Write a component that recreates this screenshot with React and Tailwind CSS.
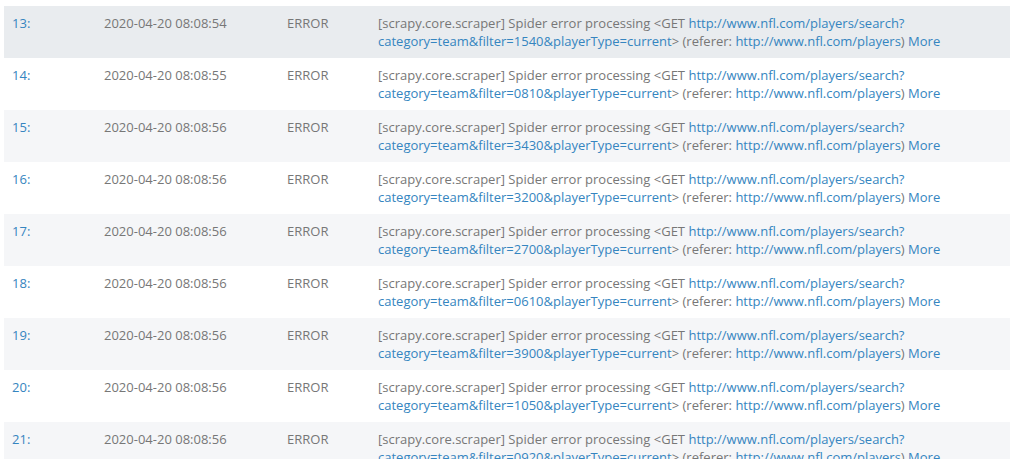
const rows = [
  { n: 13, t: '2020-04-20 08:08:54', f: '1540' },
  { n: 14, t: '2020-04-20 08:08:55', f: '0810' },
  { n: 15, t: '2020-04-20 08:08:56', f: '3430' },
  { n: 16, t: '2020-04-20 08:08:56', f: '3200' },
  { n: 17, t: '2020-04-20 08:08:56', f: '2700' },
  { n: 18, t: '2020-04-20 08:08:56', f: '0610' },
  { n: 19, t: '2020-04-20 08:08:56', f: '3900' },
  { n: 20, t: '2020-04-20 08:08:56', f: '1050' },
  { n: 21, t: '2020-04-20 08:08:56', f: '0920' },
];

function LogRow({ row, index }) {
  // first row is hovered, rest alternate
  const bg = index === 0 ? 'bg-[#e9ecef]' : index % 2 === 0 ? 'bg-[#f5f6f8]' : 'bg-white';
  return (
    <div className={`grid grid-cols-[92px_183px_91px_640px] pl-2 pt-2 pb-2 h-[52px] ${bg}`}>
      <a href="#" className="text-[#3585c0]">{row.n}:</a>
      <span>{row.t}</span>
      <span>ERROR</span>
      <span>
        [scrapy.core.scraper] Spider error processing &lt;GET{' '}
        <a href="#" className="text-[#3585c0]">http://www.nfl.com/players/search?category=team&amp;filter={row.f}&amp;playerType=current</a>
        &gt; (referer:{' '}
        <a href="#" className="text-[#3585c0]">http://www.nfl.com/players</a>){' '}
        <a href="#" className="text-[#3585c0]">More</a>
      </span>
    </div>
  );
}

export default function App() {
  return (
    <div className="w-[1010px] h-[459px] overflow-hidden bg-white pt-[6px] pl-1 font-['Open_Sans',sans-serif] text-[13px] leading-[18px] text-[#777]">
      {rows.map((r, i) => (
        <LogRow key={r.n} row={r} index={i} />
      ))}
    </div>
  );
}
